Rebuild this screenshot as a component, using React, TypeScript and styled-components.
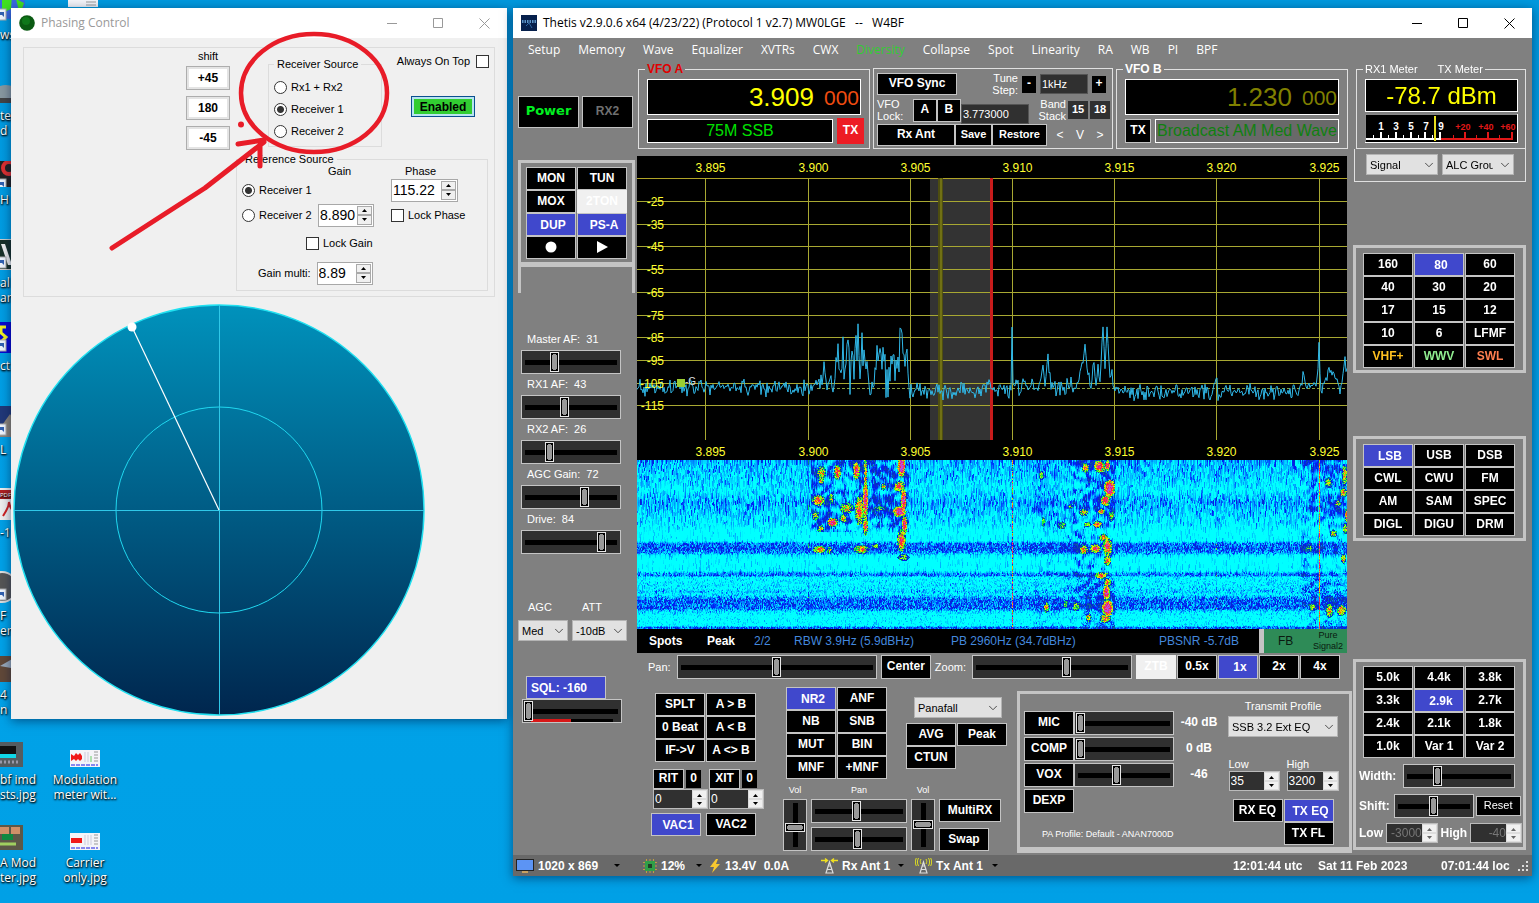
import React, { useEffect, useRef } from "react";
import styled, { createGlobalStyle, css } from "styled-components";
import { ChevronDown } from "lucide-react";

const UI = `"Liberation Sans", Arial, sans-serif`;
const SEGOE = `"Open Sans", "Noto Sans", sans-serif`;
const EDGE = "#c4c4c4";
const BLUE = "#4048cc";
const WELL = "#303030";

const Global = createGlobalStyle`
  * { box-sizing: border-box; }
  html, body { margin: 0; height: 100%; }
  body { font-family: ${UI}; font-size: 11px; line-height: 14px; overflow: hidden; background: #00a2e8; }
  button, input, select { font-family: inherit; margin: 0; padding: 0; border-radius: 0; }
  fieldset { margin: 0; min-width: 0; }
`;

/* ---------- desktop ---------- */

const Desktop = styled.div`
  position: relative;
  min-height: 100vh;
  overflow: hidden;
  background: linear-gradient(#0099de, #00a2e8 70%, #00a0e6);
`;

const Shortcut = styled.div<{ $x?: number; $y: number; $w?: number }>`
  position: absolute;
  left: ${(p) => p.$x ?? 0}px;
  top: ${(p) => p.$y}px;
  width: ${(p) => (p.$w ? `${p.$w}px` : "auto")};
  display: flex;
  flex-direction: column;
  align-items: ${(p) => (p.$w ? "center" : "flex-start")};
  gap: 5px;
  color: #fff;
  font: 12px/15px ${SEGOE};
  text-align: ${(p) => (p.$w ? "center" : "left")};
  white-space: pre;
  text-shadow: 1px 1px 2px #000, 0 1px 2px #000;
  svg { display: block; flex: none; }
`;

const WindowFrame = styled.section`
  position: absolute;
  top: 8px;
  box-shadow: 0 2px 10px rgba(0, 20, 60, 0.55);
`;

const TitleBar = styled.header<{ $dim?: boolean }>`
  display: flex;
  align-items: center;
  height: 30px;
  padding-left: 8px;
  gap: 6px;
  background: #fff;
  color: ${(p) => (p.$dim ? "#999" : "#000")};
  font: 12px/16px ${SEGOE};
  white-space: pre;
  h1 { font: inherit; margin: 0; flex: 1; }
`;

const CaptionButton = styled.button`
  width: 46px;
  height: 30px;
  border: 0;
  margin-right: -6px;
  background: none;
  color: inherit;
  display: grid;
  place-items: center;
  &:last-child { margin-right: 0; }
  path { fill: none; stroke: currentColor; }
`;

function Caption() {
  return (
    <>
      <CaptionButton aria-label="Minimize"><svg width="11" height="11"><path d="M0 5.500H10" /></svg></CaptionButton>
      <CaptionButton aria-label="Maximize"><svg width="11" height="11"><path d="M.5 .5H9.500V9.500H.5Z" /></svg></CaptionButton>
      <CaptionButton aria-label="Close"><svg width="11" height="11"><path d="M.5 .5L10.500 10.500M10.500 .5L.5 10.500" /></svg></CaptionButton>
    </>
  );
}

/* ---------- shared controls ---------- */

const Key = styled.button<{ $w?: number; $h?: number; $on?: boolean; $off?: boolean; $ink?: string; $size?: number; $plain?: boolean }>`
  width: ${(p) => p.$w ?? 50}px;
  height: ${(p) => p.$h ?? 23}px;
  flex: none;
  border: 1px solid ${EDGE};
  padding-bottom: 2px;
  background: #000;
  color: ${(p) => p.$ink ?? "#fff"};
  font-size: ${(p) => p.$size ?? 12}px;
  font-weight: ${(p) => (p.$plain ? "normal" : "bold")};
  line-height: 14px;
  white-space: nowrap;
  display: flex;
  align-items: center;
  justify-content: center;
  ${(p) => p.$on && css`background: ${BLUE}; padding: 0 0 0 4px;`}
  ${(p) => p.$off && css`background: #f0f0f0; border-color: #f0f0f0; color: #fff;`}
`;

const KeyGrid = styled.div<{ $cols: number }>`
  display: grid;
  grid-template-columns: repeat(${(p) => p.$cols}, 50px);
  grid-auto-rows: 23px;
  column-gap: 1px;
  flex: none;
`;

const Row = styled.div<{ $gap?: number; $align?: string }>`
  display: flex;
  gap: ${(p) => p.$gap ?? 0}px;
  align-items: ${(p) => p.$align ?? "center"};
`;

const thumb = css`
  -webkit-appearance: none;
  border: 1px solid #e8e8e8;
  border-radius: 0;
`;

const Range = styled.input.attrs({ type: "range", min: 0, max: 100 })<{ $w?: number; $meter?: boolean }>`
  -webkit-appearance: none;
  appearance: none;
  display: block;
  ${(p) => (p.$w ? `width: ${p.$w}px; flex: none;` : "flex: 1; width: 0; min-width: 0;")}
  height: 24px;
  border: 1px solid ${EDGE};
  background: ${(p) =>
      p.$meter ? "linear-gradient(#d81818, #d81818) 8px 100% / 40px 3px no-repeat, linear-gradient(#000, #000) 8px 100% / 82px 3px no-repeat, " : ""}
    linear-gradient(#000, #000) center / calc(100% - 6px) 5px no-repeat ${WELL};
  &::-webkit-slider-thumb {
    ${thumb}
    width: 9px;
    height: 20px;
    background: linear-gradient(#999, #999) center / 5px 14px no-repeat, linear-gradient(#999, #999) center / 3px 16px no-repeat #000;
  }
`;

const Fader = styled.input.attrs({ type: "range", min: 0, max: 100 })`
  -webkit-appearance: none;
  appearance: none;
  writing-mode: vertical-lr;
  direction: rtl;
  width: 24px;
  height: 52px;
  border: 1px solid ${EDGE};
  background: linear-gradient(#000, #000) center / 5px calc(100% - 6px) no-repeat ${WELL};
  &::-webkit-slider-thumb {
    ${thumb}
    width: 20px;
    height: 9px;
    background: linear-gradient(#999, #999) center / 14px 5px no-repeat, linear-gradient(#999, #999) center / 16px 3px no-repeat #000;
  }
`;

const SelectBox = styled.span<{ $w: number }>`
  position: relative;
  display: block;
  width: ${(p) => p.$w}px;
  height: 21px;
  flex: none;
  select {
    appearance: none;
    width: 100%;
    height: 100%;
    padding: 0 20px 0 3px;
    border: 1px solid #b4b4b4;
    background: #e1e1e1;
    color: #000;
    font-size: 11px;
  }
  svg { position: absolute; right: 2px; top: 4px; color: #444; pointer-events: none; }
`;

function Select({ w, value, label }: { w: number; value: string; label: string }) {
  return (
    <SelectBox $w={w}>
      <select aria-label={label}><option>{value}</option></select>
      <ChevronDown size={14} strokeWidth={1.6} />
    </SelectBox>
  );
}

const SpinBox = styled.span<{ $w: number; $light?: boolean; $dim?: boolean; $size?: number }>`
  display: flex;
  width: ${(p) => p.$w}px;
  height: ${(p) => (p.$light ? 23 : 20)}px;
  flex: none;
  border: 1px solid ${(p) => (p.$light ? "#a8a8a8" : "#bbb")};
  background: ${(p) => (p.$light ? "#fff" : WELL)};
  input {
    flex: 1;
    width: 0;
    min-width: 0;
    border: 0;
    padding-left: 1px;
    background: none;
    color: ${(p) => (p.$light ? "#000" : p.$dim ? "#777" : "#fff")};
    font-size: ${(p) => p.$size ?? 12}px;
    text-align: ${(p) => (p.$dim ? "right" : "left")};
  }
  span { display: grid; grid-template-rows: 1fr 1fr; width: 15px; background: #f0f0f0; ${(p) => p.$light && "margin: 1px;"} }
  button { border: 1px solid ${(p) => (p.$light ? "#aaa" : "#ddd")}; background: #f0f0f0; display: grid; place-items: center; }
`;

function Spin({ w, value, label, light, dim, size }: { w: number; value: string; label: string; light?: boolean; dim?: boolean; size?: number }) {
  const ink = dim ? "#666" : "#000";
  return (
    <SpinBox $w={w} $light={light} $dim={dim} $size={size}>
      <input type="text" aria-label={label} defaultValue={value} />
      <span>
        <button aria-label={`${label} up`}><svg width="7" height="4"><path d="M1 4L3.500 1L6 4Z" fill={ink} /></svg></button>
        <button aria-label={`${label} down`}><svg width="7" height="4"><path d="M1 0L3.500 3L6 0Z" fill={ink} /></svg></button>
      </span>
    </SpinBox>
  );
}

/* ---------- phasing window ---------- */

const PhasingFrame = styled(WindowFrame)`
  left: 11px;
  width: 496px;
  background: #f0f0f0;
  color: #000;
  padding-bottom: 3px;
`;

const PhasePanel = styled.div`
  margin: 9px 12px 7px;
  height: 250px;
  border: 1px solid #dcdcdc;
  padding-right: 6px;
  display: flex;
  flex-direction: column;
`;

const PhaseTop = styled.div`
  display: flex;
  height: 104px;
  padding-left: 162px;
`;

const ShiftColumn = styled.div`
  display: flex;
  flex-direction: column;
  align-items: center;
  width: 44px;
  padding-top: 1px;
  gap: 6px;
  span { margin-bottom: -3px; }
  button {
    width: 44px;
    height: 24px;
    border: 1px solid #adadad;
    box-shadow: inset 0 0 0 2px #e4e4e4;
    background: #fff;
    font-size: 12px;
    font-weight: bold;
  }
`;

const LightGroup = styled.fieldset<{ $w: number; $h: number }>`
  width: ${(p) => p.$w}px;
  height: ${(p) => p.$h}px;
  border: 1px solid #dcdcdc;
  padding: 0 0 0 5px;
  legend { padding: 0 3px; }
`;

const SourceGroup = styled(LightGroup)`
  margin: 9px 0 0 38px;
`;

const Choice = styled.label`
  display: flex;
  align-items: center;
  gap: 4px;
  white-space: nowrap;
  input { appearance: none; flex: none; width: 13px; height: 13px; border: 1px solid #333; background: #fff; }
  input[type="radio"] { border-radius: 50%; }
  input[type="radio"]:checked { background: radial-gradient(circle, #333 0 3px, #fff 4px); }
`;

const RadioStack = styled.div`
  display: flex;
  flex-direction: column;
  gap: 8px;
  padding-top: 9px;
`;

const TopRight = styled.div`
  margin-left: auto;
  margin-right: -6px;
  padding-top: 6px;
  display: flex;
  flex-direction: column;
  align-items: flex-end;
  gap: 28px;
  label { padding-right: 5px; gap: 6px; }
`;

const EnabledButton = styled.button`
  width: 64px;
  height: 21px;
  margin-right: 19px;
  border: 1px solid #0a5090;
  box-shadow: inset 0 0 0 2px #b8e4f0;
  background: #32cd32;
  font-size: 12px;
  font-weight: bold;
`;

const ReferenceGroup = styled(LightGroup)`
  margin-left: auto;
`;

const ReferenceGrid = styled.div`
  display: grid;
  grid-template-columns: 76px 73px 80px;
  grid-template-rows: 14px 24px 26px 30px 30px;
  align-items: center;
  margin-top: -2px;
`;

const Cell = styled.div<{ $col: string; $row: number; $indent?: number }>`
  grid-column: ${(p) => p.$col};
  grid-row: ${(p) => p.$row};
  display: flex;
  align-items: center;
  gap: 6px;
  padding-left: ${(p) => p.$indent ?? 0}px;
  white-space: nowrap;
`;

const Compass = styled.svg`
  display: block;
  width: 412px;
  height: 412px;
  margin-left: 2px;
`;

function Phasing() {
  return (
    <PhasingFrame aria-label="Phasing Control">
      <TitleBar $dim>
        <svg width="16" height="16"><circle cx="8" cy="8" r="7.8" fill="#0a5a12" /><circle cx="7" cy="6" r="4" fill="#128a20" opacity=".6" /></svg>
        <h1>Phasing Control</h1>
        <Caption />
      </TitleBar>
      <PhasePanel>
        <PhaseTop>
          <ShiftColumn>
            <span>shift</span>
            <button>+45</button>
            <button>180</button>
            <button>-45</button>
          </ShiftColumn>
          <SourceGroup $w={114} $h={90}>
            <legend>Receiver Source</legend>
            <RadioStack>
              <Choice><input type="radio" name="rx" />Rx1 + Rx2</Choice>
              <Choice><input type="radio" name="rx" defaultChecked />Receiver 1</Choice>
              <Choice><input type="radio" name="rx" />Receiver 2</Choice>
            </RadioStack>
          </SourceGroup>
          <TopRight>
            <Choice>Always On Top<input type="checkbox" /></Choice>
            <EnabledButton>Enabled</EnabledButton>
          </TopRight>
        </PhaseTop>
        <ReferenceGroup $w={252} $h={139}>
          <legend>Reference Source</legend>
          <ReferenceGrid>
            <Cell $col="2" $row={1} $indent={10}>Gain</Cell>
            <Cell $col="3" $row={1} $indent={14}>Phase</Cell>
            <Cell $col="1 / 3" $row={2}><Choice><input type="radio" name="ref" defaultChecked />Receiver 1</Choice></Cell>
            <Cell $col="3" $row={2}><Spin w={67} value="115.22" label="Phase" light size={14} /></Cell>
            <Cell $col="1" $row={3}><Choice><input type="radio" name="ref" />Receiver 2</Choice></Cell>
            <Cell $col="2" $row={3}><Spin w={56} value="8.890" label="Gain" light size={14} /></Cell>
            <Cell $col="3" $row={3}><Choice><input type="checkbox" />Lock Phase</Choice></Cell>
            <Cell $col="1 / 3" $row={4} $indent={64}><Choice><input type="checkbox" />Lock Gain</Choice></Cell>
            <Cell $col="1 / 3" $row={5} $indent={16}>Gain multi:<Spin w={56} value="8.89" label="Gain multi" light size={14} /></Cell>
          </ReferenceGrid>
        </ReferenceGroup>
      </PhasePanel>
      <Compass viewBox="0 0 412 412">
        <defs>
          <linearGradient id="sea" x1="0" y1="0" x2="0" y2="1"><stop offset="0" stopColor="#0092bc" /><stop offset="1" stopColor="#00264e" /></linearGradient>
        </defs>
        <circle cx="206" cy="206" r="205" fill="url(#sea)" stroke="#20e0f0" strokeWidth="1.4" />
        <circle cx="206" cy="206" r="103" fill="none" stroke="#20d8f0" />
        <path d="M206.5 1V411M1 206.5H411" stroke="#30c8e8" fill="none" />
        <path d="M206 206L119 23" stroke="#fff" strokeWidth="1.2" />
        <circle cx="119" cy="23" r="4.5" fill="#fff" />
      </Compass>
    </PhasingFrame>
  );
}

/* ---------- spectrum ---------- */

function seeded(seed: number) {
  let s = seed;
  return () => {
    s = (s * 1664525 + 1013904223) >>> 0;
    return s / 4294967296;
  };
}

const peaks: [number, number][] = [
  [0, 231], [180, 232], [184, 224], [185, 226], [187, 203], [189, 230], [193, 222], [196, 234], [199, 220], [201, 192], [203, 226],
  [206, 200], [208, 214], [211, 184], [213, 222], [216, 200], [217, 228], [219, 176], [220, 202], [221, 173], [223, 216], [225, 198], [227, 189], [229, 222],
  [231, 206], [233, 226], [237, 228], [239, 206], [241, 196], [244, 206], [247, 198], [250, 226], [254, 200], [257, 208],
  [259, 218], [262, 196], [263, 174], [265, 176], [267, 202], [269, 200], [272, 232], [275, 235], [345, 234], [347, 228], [374, 234], [375, 174],
  [376, 232], [402, 230], [406, 212], [408, 226], [411, 200], [414, 231], [440, 229], [445, 208], [448, 196], [450, 214], [454, 230],
  [457, 206], [459, 228], [461, 214], [463, 224], [466, 173], [468, 220], [470, 177], [473, 218], [474, 214], [477, 234], [479, 236],
  [577, 235], [579, 222], [581, 236], [662, 236], [666, 223], [670, 232], [680, 226], [682, 192], [684, 236], [692, 211], [697, 217], [704, 234], [708, 208], [710, 206],
];

function tracePath() {
  const rnd = seeded(41);
  let d = "";
  let k = 0;
  for (let x = 0; x <= 710; x += 1) {
    while (k < peaks.length - 2 && peaks[k + 1][0] <= x) k += 1;
    const [x0, y0] = peaks[k];
    const [x1, y1] = peaks[k + 1];
    const y = y0 + ((y1 - y0) * (x - x0)) / (x1 - x0);
    const spread = y > 228 ? 10 : x > 196 && x < 272 && y > 182 ? 26 : 9;
    const n = (rnd() + rnd() - 1) * spread;
    d += `${x ? "L" : "M"}${x} ${(y + n).toFixed(1)}`;
  }
  return d;
}

const trace = tracePath();
const freqs = ["3.895", "3.900", "3.905", "3.910", "3.915", "3.920", "3.925"];
const freqX = [68.5, 171.5, 273.5, 375.5, 477.5, 579.5, 682.5];
const levelY = [45.5, 68.5, 90.5, 113.5, 136.5, 159.5, 181.5, 204.5, 227.5, 249.5];
const levels = ["-25", "-35", "-45", "-55", "-65", "-75", "-85", "-95", "-105", "-115"];

const SpectrumSvg = styled.svg`
  display: block;
  width: 100%;
  background: #000;
  font-family: ${UI};
`;

function Spectrum() {
  return (
    <SpectrumSvg viewBox="0 0 710 304" role="img" aria-label="Spectrum">
      <rect x="293" y="22" width="62" height="262" fill="#333" />
      <g stroke="#a8a832" fill="none">
        <path d="M0 22.5H710" stroke="#b0a428" />
        {levelY.map((y) => <path key={y} d={`M0 ${y}H710`} />)}
        {freqX.map((x) => <path key={x} d={`M${x} 22V284`} />)}
      </g>
      <rect x="301" y="22" width="5" height="262" fill="#50500c" opacity=".9" />
      <rect x="303" y="22" width="2" height="262" fill="#707014" />
      <rect x="353" y="22" width="3" height="262" fill="#c81c1c" />
      <path d="M180 232.5H710" stroke="#a8c850" strokeDasharray="3 2" opacity=".8" />
      <path d={trace} fill="none" stroke="#30b8e8" />
      <g fill="#ffff30" fontSize="12" textAnchor="middle">
        {freqs.map((f, i) => <text key={f} x={freqX[i] + 5} y="16">{f}</text>)}
        {freqs.map((f, i) => <text key={f} x={freqX[i] + 5} y="300">{f}</text>)}
      </g>
      <g fill="#ffff30" fontSize="12" textAnchor="end">
        {levels.map((l, i) => <text key={l} x="27" y={levelY[i] + 4}>{l}</text>)}
      </g>
      <rect x="40" y="223" width="8" height="8" fill="#9acd32" />
      <text x="48" y="229" fontSize="10" fill="#ddd">-G</text>
    </SpectrumSvg>
  );
}

/* ---------- waterfall ---------- */

const WaterfallCanvas = styled.canvas`
  display: block;
  width: 100%;
`;

const blobs: [number, number, number, number, number][] = [
  [184, 12, 5, 7, 0.7], [184, 20, 3, 5, 0.7], [200, 12, 4, 8, 0.9], [219, 10, 4, 10, 1], [228, 12, 2, 30, 0.7], [222, 50, 5, 16, 0.9], [228, 40, 3, 22, 1.1],
  [181, 40, 7, 6, 0.9], [194, 38, 3, 6, 0.6], [209, 48, 7, 6, 0.7], [178, 55, 4, 5, 0.6], [195, 62, 6, 5, 1.1], [183, 68, 4, 4, 0.6], [206, 58, 4, 5, 0.7],
  [228, 66, 3, 10, 0.9], [246, 26, 3, 4, 0.7], [242, 48, 6, 3, 0.5], [264, 6, 4, 12, 1.3], [262, 26, 6, 6, 0.9], [266, 40, 3, 14, 1.2], [262, 51, 7, 6, 1.2],
  [267, 64, 3, 10, 1], [264, 80, 5, 12, 0.9], [266, 97, 6, 4, 0.5], [182, 89, 7, 4, 0.9], [192, 90, 3, 4, 0.6], [224, 89, 8, 5, 0.8], [238, 86, 4, 3, 0.6],
  [448, 7, 4, 5, 0.8], [462, 6, 6, 7, 1], [470, 5, 3, 6, 1], [472, 28, 6, 10, 1.2], [468, 40, 5, 6, 1], [433, 46, 3, 3, 0.5], [446, 52, 5, 4, 0.7], [464, 51, 4, 3, 0.8],
  [474, 56, 3, 6, 0.6], [424, 65, 5, 4, 0.5], [450, 64, 4, 3, 0.6], [460, 64, 5, 4, 0.9], [466, 77, 5, 4, 0.8], [470, 86, 5, 10, 1], [446, 89, 5, 5, 0.8],
  [458, 88, 6, 5, 0.9], [470, 100, 4, 6, 0.8], [464, 115, 7, 4, 0.8], [470, 122, 4, 5, 0.8], [469, 132, 4, 8, 1.2], [470, 148, 6, 9, 1.3], [468, 158, 6, 5, 0.8],
  [409, 147, 3, 6, 0.8], [439, 146, 4, 5, 0.6], [428, 144, 3, 4, 0.5], [451, 157, 3, 5, 0.6], [404, 15, 3, 5, 0.6], [406, 61, 2, 5, 0.6],
  [691, 22, 4, 6, 0.6], [707, 15, 3, 12, 0.7], [706, 32, 4, 5, 0.8], [700, 43, 4, 4, 0.5], [696, 73, 4, 4, 0.6], [708, 68, 3, 6, 0.7],
  [672, 88, 4, 4, 0.5], [706, 98, 3, 5, 0.8], [675, 147, 4, 4, 0.6], [692, 150, 4, 8, 0.7], [704, 150, 5, 6, 0.8], [709, 55, 2, 7, 0.9],
];

const palette: [number, number, number, number][] = [
  [0, 0, 255, 255], [0.3, 0, 150, 255], [0.5, 0, 30, 250], [0.64, 10, 40, 200], [0.74, 0, 240, 60], [0.9, 240, 240, 0], [1.05, 250, 50, 20], [1.2, 230, 30, 160], [1.4, 180, 90, 220],
];

function colourOf(v: number): [number, number, number] {
  for (let i = 1; i < palette.length; i += 1) {
    if (v <= palette[i][0]) {
      const a = palette[i - 1];
      const b = palette[i];
      const t = Math.max(0, (v - a[0]) / (b[0] - a[0]));
      return [a[1] + (b[1] - a[1]) * t, a[2] + (b[2] - a[2]) * t, a[3] + (b[3] - a[3]) * t];
    }
  }
  return [180, 90, 220];
}

/* Vertical profile of the noise floor, as points of (row, level). */
const profile: [number, number][] = [
  [0, 0.24], [8, 0.16], [18, 0.12], [28, 0.0], [34, 0.08], [42, 0.24], [48, 0.18], [56, 0.08], [64, 0.02], [70, -0.12], [80, -0.12],
  [83, 0.34], [88, 0.44], [92, 0.3], [95, -0.02], [99, -0.16], [110, -0.08], [113, 0.3], [115, 0.34], [117, -0.04], [122, 0.0], [128, 0.02], [131, 0.14],
  [134, 0.0], [137, 0.26], [140, 0.38], [148, 0.4], [151, 0.06], [156, -0.12], [165, -0.08], [167, 0.4], [169, 0.4],
];

function floorLevel(y: number) {
  for (let i = 1; i < profile.length; i += 1) {
    if (y <= profile[i][0]) {
      const [y0, v0] = profile[i - 1];
      const [y1, v1] = profile[i];
      return v0 + ((v1 - v0) * (y - y0)) / (y1 - y0);
    }
  }
  return 0.4;
}

function Waterfall() {
  const ref = useRef<HTMLCanvasElement>(null);
  useEffect(() => {
    const ctx = ref.current?.getContext("2d");
    if (!ctx) return;
    const W = 710;
    const H = 169;
    const img = ctx.createImageData(W, H);
    const rnd = seeded(7);
    for (let x = 0; x < W; x += 1) {
      let n = 0;
      let run = 0;
      const busy = (x > 173 && x < 272) || (x > 395 && x < 478) || x > 663;
      for (let y = 0; y < H; y += 1) {
        if (run <= 0) {
          n = (rnd() + rnd() - 1) * 0.42;
          run = (y > 80 && y < 94) || y > 110 ? 1 + Math.floor(rnd() * 2) : 2 + Math.floor(rnd() * 5);
        }
        run -= 1;
        let v = Math.min(floorLevel(y) + n, 0.62);
        if (busy) {
          const patch = Math.sin(x / 4 + Math.sin(y / 5) * 2) * Math.sin(y / 4 + Math.sin(x / 6) * 2);
          const reach = x < 300 ? (y < 72 ? 0.34 : 0) : x < 480 ? (x > 435 ? 0.3 : 0.12) : 0.24;
          v += reach * (0.55 + patch * 1.1);
          v = Math.min(v, 0.62 + (x < 300 || x > 435 ? rnd() * 0.06 : 0));
        }
        if (x === 375) v = 0.5 + rnd() * 0.9;
        if (x === 682) v = 0.75 + rnd() * 0.5;
        if (x === 579 || x === 171) v += 0.2;
        for (const [bx, by, rx, ry, s] of blobs) {
          const dx = (x - bx) / rx;
          const dy = (y - by) / ry;
          const r = dx * dx + dy * dy + (rnd() - 0.5) * 0.3;
          if (r < 0.9) v = Math.max(v, 0.42 + s * 0.78 * Math.exp(-Math.max(r, 0) * 1.3) + (rnd() - 0.5) * 0.34);
        }
        const [r, g, b] = colourOf(v);
        const o = (y * W + x) * 4;
        img.data[o] = r;
        img.data[o + 1] = g;
        img.data[o + 2] = b;
        img.data[o + 3] = 255;
      }
    }
    ctx.putImageData(img, 0, 0);
  }, []);
  return <WaterfallCanvas ref={ref} width={710} height={169} aria-label="Waterfall" />;
}

/* ---------- radio window ---------- */

const RadioFrame = styled(WindowFrame)`
  left: 513px;
  right: 7px;
  min-width: 1019px;
  background: #808080;
  color: #fff;
`;

const MenuBar = styled.nav`
  display: flex;
  gap: 18px;
  height: 24px;
  padding-left: 15px;
  font: 12px/24px ${SEGOE};
  a { color: #fff; text-decoration: none; }
  a[data-active] { color: #32cd32; }
`;

const Body = styled.main`
  display: grid;
  grid-template-columns: 124px 1fr 180px;
  padding-bottom: 2px;
`;

const LeftColumn = styled.div`
  display: flex;
  flex-direction: column;
  padding: 34px 0 0 5px;
`;

const PowerKey = styled(Key)`
  font-family: "DejaVu Sans", sans-serif;
  font-size: 13px;
`;

const SideFrame = styled.div`
  margin-top: 32px;
  width: 117px;
  border: 3px solid ${EDGE};
  border-bottom-width: 5px;
  padding: 4px 5px 3px;
`;

const SideWalls = styled.div`
  width: 117px;
  height: 26px;
  border: solid ${EDGE};
  border-width: 0 3px;
  margin-bottom: 37px;
`;

const Level = styled.div`
  height: 45px;
  padding-left: 3px;
  label { display: block; padding-left: 6px; line-height: 18px; margin-bottom: 2px; white-space: pre; }
`;

const AgcRow = styled.div`
  display: flex;
  gap: 4px;
  margin-top: 45px;
  label { display: flex; flex-direction: column; gap: 6px; }
  label > span:first-child { padding-left: 10px; }
`;

const Squelch = styled.div`
  margin-top: 35px;
  padding-left: 4px;
  button { margin-left: 4px; justify-content: flex-start; }
`;

const CenterColumn = styled.div`
  min-width: 0;
`;

const VfoRow = styled.div`
  display: grid;
  grid-template-columns: 1fr 240px 1fr;
  gap: 3px;
  padding: 0 4px 0 1px;
`;

const VfoGroup = styled.fieldset<{ $ink: string }>`
  height: 87px;
  border: 1px solid #e0e0e0;
  padding: 3px 8px 5px;
  legend { font-size: 12px; font-weight: bold; line-height: 14px; padding: 0 2px; margin-left: -2px; color: ${(p) => p.$ink}; }
`;

const Readout = styled.div<{ $h: number }>`
  display: flex;
  align-items: center;
  justify-content: flex-end;
  height: ${(p) => p.$h}px;
  padding-right: 1px;
  border: 1px solid #fff;
  background: #000;
`;

const FreqMain = styled.span<{ $dim?: boolean }>`
  font-size: 26px;
  line-height: 32px;
  color: ${(p) => (p.$dim ? "#808000" : "#ffff00")};
  margin-right: 10px;
`;

const FreqTail = styled.span<{ $dim?: boolean }>`
  font-size: 21px;
  line-height: 32px;
  padding-top: 1px;
  color: ${(p) => (p.$dim ? "#808000" : "#f04c10")};
`;

const BandName = styled.div<{ $dim?: boolean }>`
  flex: 1;
  height: 24px;
  border: 1px solid #fff;
  background: ${(p) => (p.$dim ? "#696969" : "#000")};
  color: ${(p) => (p.$dim ? "#108010" : "#00e000")};
  font-size: 16px;
  line-height: 22px;
  text-align: center;
  white-space: nowrap;
`;

const TxKey = styled(Key)<{ $hot?: boolean }>`
  ${(p) => p.$hot && css`background: #ed1c24; border-color: #ed1c24; margin-right: -3px;`}
`;

const VfoLine = styled(Row)`
  margin-top: 4px;
  height: 24px;
`;

const SyncPanel = styled.div`
  margin-top: 6px;
  height: 81px;
  border: 1px solid #e0e0e0;
  padding: 3px 2px 0 3px;
  display: grid;
  grid-template-rows: 24px 28px 22px;
`;

const Stacked = styled.span<{ $end?: boolean }>`
  font-size: 11px;
  line-height: 12px;
  white-space: pre;
  text-align: ${(p) => (p.$end ? "right" : "left")};
`;

const DarkField = styled.input.attrs({ type: "text" })<{ $w: number }>`
  width: ${(p) => p.$w}px;
  height: 20px;
  flex: none;
  border: 1px solid #555;
  padding-left: 1px;
  background: ${WELL};
  color: #fff;
  font-size: 11px;
`;

const StoredField = styled(DarkField)`
  align-self: flex-end;
`;

const FlatKey = styled(Key)<{ $fill?: string }>`
  border-color: ${(p) => p.$fill ?? "#000"};
  background: ${(p) => p.$fill ?? "#000"};
`;

const ArrowKey = styled.button`
  width: 20px;
  border: 0;
  background: none;
  color: #fff;
  font-size: 12px;
`;

const Push = styled.span`
  margin-left: auto;
`;

const Panadapter = styled.div`
  margin: 7px 5px 0 0;
`;

const InfoBar = styled.div`
  display: flex;
  height: 24px;
  background: #000;
  font-size: 12px;
  line-height: 24px;
  color: #4488dd;
  padding-left: 12px;
  white-space: nowrap;
  b { color: #fff; }
`;

const InfoCell = styled.span<{ $w?: number }>`
  ${(p) => (p.$w ? `width: ${p.$w}px;` : "flex: 1;")}
`;

const PureSignal = styled.div`
  display: flex;
  align-items: center;
  justify-content: space-between;
  width: 88px;
  padding: 0 4px 0 14px;
  border-left: 5px solid ${EDGE};
  background: #2e8b57;
  color: #0a1a10;
  small { font-size: 9px; line-height: 11px; text-align: center; white-space: pre; }
`;

const PanRow = styled.div`
  display: flex;
  align-items: center;
  gap: 4px;
  height: 24px;
  margin-top: 2px;
  padding: 0 12px 0 11px;
  label { margin-right: 2px; }
`;

const Lower = styled.div`
  display: flex;
  padding-left: 14px;
`;

const SplitColumn = styled.div`
  padding-top: 14px;
  width: 113px;
  flex: none;
`;

const SplitKeys = styled.div`
  padding-left: 4px;
  margin-bottom: 7px;
`;

const RitGrid = styled.div`
  display: grid;
  grid-template-columns: 55px 55px;
  column-gap: 1px;
  padding-left: 2px;
  margin-bottom: 4px;
`;

const DspColumn = styled.div`
  margin-left: 19px;
  width: 224px;
  padding-top: 8px;
  flex: none;
`;

const DspTop = styled.div`
  display: flex;
  gap: 19px;
  padding-left: 3px;
`;

const DisplayModes = styled.div`
  padding-top: 10px;
  span + div { margin-top: 5px; }
  > span { margin-left: 8px; }
`;

const Mixer = styled.div`
  display: grid;
  grid-template-columns: 24px 96px 24px 62px;
  grid-template-rows: 12px 52px;
  gap: 3px 4px;
  margin-top: 5px;
  > label { font-size: 9px; line-height: 12px; text-align: center; }
`;

const MixStack = styled.div`
  display: flex;
  flex-direction: column;
  justify-content: space-between;
  input { flex: none; }
`;

const TransmitPanel = styled.div`
  flex: 1;
  min-width: 0;
  height: 162px;
  margin: 12px 0 0 10px;
  border: 3px solid ${EDGE};
  border-bottom-width: 6px;
  display: flex;
  justify-content: space-between;
  padding: 5px 11px 0 4px;
`;

const TxRows = styled.div`
  padding-top: 12px;
  display: grid;
  grid-template-columns: 50px 100px 50px;
  grid-auto-rows: 24px;
  row-gap: 2px;
  align-content: start;
  align-items: center;
  b { font-size: 12px; text-align: center; white-space: nowrap; padding-bottom: 2px; }
  small { grid-column: 1 / 4; font-size: 9px; padding: 14px 0 0 18px; white-space: nowrap; }
`;

const TxProfile = styled.div`
  width: 110px;
  display: flex;
  flex-direction: column;
  align-items: center;
  gap: 3px;
`;

const CutoffRow = styled.div`
  display: flex;
  gap: 6px;
  margin-top: 18px;
  label { display: block; line-height: 13px; padding-left: 1px; }
`;

const EqGrid = styled.div`
  margin-top: 5px;
  display: grid;
  grid-template-columns: 50px 50px;
  column-gap: 1px;
  button:last-child { grid-column: 2; }
`;

const RightColumn = styled.div`
  padding: 0 6px 0 1px;
`;

const MeterGroup = styled.fieldset`
  margin-left: 3px;
  height: 87px;
  border: 1px solid #e0e0e0;
  padding: 3px 7px 5px 8px;
  legend { padding: 0 2px; margin-left: -2px; line-height: 14px; white-space: pre; display: flex; gap: 20px; }
`;

const MeterValue = styled.div`
  height: 33px;
  border: 1px solid #fff;
  background: #000;
  color: #ffff00;
  font-size: 24px;
  line-height: 31px;
  text-align: center;
  margin-bottom: 2px;
`;

const MeterSelects = styled.div`
  display: flex;
  gap: 4px;
  height: 33px;
  margin-left: 1px;
  padding: 5px 0 0 11px;
  border: 1px solid #e0e0e0;
  border-top: 0;
`;

const KeyFrame = styled.div`
  margin-top: 63px;
  border: 3px solid ${EDGE};
  padding: 5px 0 2px 7px;
`;

const FilterFrame = styled(KeyFrame)`
  margin-top: 118px;
  padding: 4px 0 4px 7px;
`;

const FilterLine = styled.div<{ $gap: number; $end?: number }>`
  display: flex;
  align-items: center;
  justify-content: space-between;
  gap: 2px;
  margin: ${(p) => p.$gap}px ${(p) => p.$end ?? 3}px 0 -4px;
  font-size: 12px;
  font-weight: bold;
  white-space: nowrap;
`;

const StatusBar = styled.footer`
  display: flex;
  align-items: center;
  height: 21px;
  padding: 0 3px;
  background: #696969;
  font-size: 12px;
  font-weight: bold;
  line-height: 20px;
  white-space: pre;
`;

const StatusItem = styled.span<{ $w: number; $pad?: number }>`
  display: flex;
  align-items: center;
  gap: 4px;
  width: ${(p) => p.$w}px;
  padding-right: ${(p) => p.$pad ?? 0}px;
  flex: none;
`;

const CaretSvg = styled.svg`
  margin-left: auto;
`;

function Caret() {
  return <CaretSvg width="6" height="3"><path d="M0 0H6L3 3Z" fill="#000" /></CaretSvg>;
}

function MeterScale() {
  const white: [number, string][] = [[16, "1"], [31, "3"], [46, "5"], [61, "7"], [76, "9"]];
  const red: [number, string][] = [[98, "+20"], [121, "+40"], [143, "+60"]];
  return (
    <svg width="100%" height="29" viewBox="0 0 153 29" role="img" aria-label="S meter" fontFamily="Liberation Sans" fontWeight="bold">
      <rect width="153" height="29" fill="#fff" />
      <rect x="0" y="0" width="152" height="28" fill="#888" />
      <rect x="1" y="1" width="151" height="27" fill="#000" />
      <g fill="#fff" fontSize="10" textAnchor="middle">{white.map(([x, t]) => <text key={t} x={x} y="16">{t}</text>)}</g>
      <g fill="#e01818" fontSize="9" textAnchor="middle">{red.map(([x, t]) => <text key={t} x={x} y="16">{t}</text>)}</g>
      <path d="M1 25H76M16 24V18M31 24V18M46 24V18M60 24V18M75 24V18" stroke="#fff" strokeWidth="2" />
      <path d="M8.500 24V21M23.500 24V21M38.500 24V21M53.500 24V21M67.500 24V21" stroke="#fff" />
      <path d="M76 25H148M100 24V18M123 24V18M147 24V18" stroke="#e01818" strokeWidth="2" />
      <path d="M88.500 24V21M111.500 24V21M134.500 24V21" stroke="#e01818" />
      <path d="M70 2V27" stroke="#e8e020" strokeWidth="2" />
    </svg>
  );
}

function Antenna({ tx }: { tx?: boolean }) {
  return (
    <svg width="17" height="17" viewBox="0 0 17 17" fill="none">
      <path d="M8.500 5L5 16H12ZM7.500 9H9.500M6 12.500H11" stroke="#ddd" strokeWidth="1.2" />
      {tx ? (
        <path d="M6 2C5 4 5 5 6 7M11 2C12 4 12 5 11 7M3.500 1C2 4 2 6 3.500 9M13.500 1C15 4 15 6 13.500 9M1.300 1C0 4 0 6 1.300 9M15.700 1C17 4 17 6 15.700 9" stroke="#e0e020" />
      ) : (
        <path d="M0 3.500H6M4 1.500L6.500 3.500L4 5.500M17 3.500H11M13 1.500L10.500 3.500L13 5.500" stroke="#f0e020" strokeWidth="1.4" />
      )}
    </svg>
  );
}

const levelsAf: [string, string, number][] = [
  ["Master AF", "31", 31], ["RX1 AF", "43", 43], ["RX2 AF", "26", 26], ["AGC Gain", "72", 65], ["Drive", "84", 84],
];
const menu = ["Setup", "Memory", "Wave", "Equalizer", "XVTRs", "CWX", "Diversity", "Collapse", "Spot", "Linearity", "RA", "WB", "PI", "BPF"];
const bands = ["160", "80", "60", "40", "30", "20", "17", "15", "12", "10", "6", "LFMF", "VHF+", "WWV", "SWL"];
const bandInk: Record<string, string> = { "VHF+": "#ffc020", WWV: "#90ee90", SWL: "#ff7f50" };
const modes = ["LSB", "USB", "DSB", "CWL", "CWU", "FM", "AM", "SAM", "SPEC", "DIGL", "DIGU", "DRM"];
const filters = ["5.0k", "4.4k", "3.8k", "3.3k", "2.9k", "2.7k", "2.4k", "2.1k", "1.8k", "1.0k", "Var 1", "Var 2"];

function Keys({ cols, items, on = [], ink = {} }: { cols: number; items: string[]; on?: string[]; ink?: Record<string, string> }) {
  return (
    <KeyGrid $cols={cols}>
      {items.map((t) => <Key key={t} $on={on.includes(t)} $ink={ink[t]}>{t}</Key>)}
    </KeyGrid>
  );
}

function LeftControls() {
  return (
    <LeftColumn>
      <Row $gap={3}>
        <PowerKey $w={61} $h={32} $ink="#00f020">Power</PowerKey>
        <Key $w={51} $h={32} $ink="#707070">RX2</Key>
      </Row>
      <SideFrame>
        <KeyGrid $cols={2}>
          <Key>MON</Key><Key>TUN</Key>
          <Key>MOX</Key><Key $off>2TON</Key>
          <Key $on>DUP</Key><Key $on>PS-A</Key>
          <Key aria-label="Record"><svg width="12" height="12"><circle cx="6" cy="6" r="5.5" fill="#fff" /></svg></Key>
          <Key aria-label="Play"><svg width="12" height="12"><path d="M1 0L12 6L1 12Z" fill="#fff" /></svg></Key>
        </KeyGrid>
      </SideFrame>
      <SideWalls />
      {levelsAf.map(([name, shown, v]) => (
        <Level key={name}>
          <label htmlFor={name}>{`${name}:  ${shown}`}</label>
          <Range id={name} $w={100} defaultValue={v} />
        </Level>
      ))}
      <AgcRow>
        <label><span>AGC</span><Select w={50} value="Med" label="AGC" /></label>
        <label><span>ATT</span><Select w={55} value="-10dB" label="ATT" /></label>
      </AgcRow>
      <Squelch>
        <Key $w={80} $on>SQL: -160</Key>
        <Range $w={100} $meter defaultValue={1} aria-label="Squelch" />
      </Squelch>
    </LeftColumn>
  );
}

function VfoSection() {
  return (
    <VfoRow>
      <VfoGroup $ink="#e00000">
        <legend>VFO A</legend>
        <Readout $h={36}><FreqMain>3.909</FreqMain><FreqTail>000</FreqTail></Readout>
        <VfoLine $gap={4}><BandName>75M SSB</BandName><TxKey $w={27} $h={26} $hot>TX</TxKey></VfoLine>
      </VfoGroup>
      <SyncPanel>
        <Row>
          <Key $w={80} $h={22}>VFO Sync</Key>
          <Push /><Stacked $end>{"Tune\nStep:"}</Stacked>
          <Row $gap={4}>
            <span />
            <FlatKey $w={14} $h={17}>-</FlatKey>
            <DarkField $w={48} defaultValue="1kHz" aria-label="Tune step" />
            <FlatKey $w={14} $h={17}>+</FlatKey>
            <span />
          </Row>
        </Row>
        <Row>
          <Stacked>{"VFO\nLock:"}</Stacked>
          <Push />
          <Key $w={24}>A</Key><Key $w={24}>B</Key>
          <StoredField $w={68} defaultValue="3.773000" aria-label="Stored frequency" />
          <Push /><Stacked $end>{"Band\nStack"}</Stacked>
          <Row $gap={2}>
            <span />
            <FlatKey $w={20} $h={18} $size={11} $fill={WELL}>15</FlatKey>
            <FlatKey $w={20} $h={18} $size={11} $fill={WELL}>18</FlatKey>
          </Row>
        </Row>
        <Row>
          <Key $w={78} $h={22}>Rx Ant</Key><Key $w={37} $h={22} $size={11}>Save</Key><Key $w={55} $h={22} $size={11}>Restore</Key>
          <Push />
          <ArrowKey>&lt;</ArrowKey><ArrowKey>V</ArrowKey><ArrowKey>&gt;</ArrowKey>
        </Row>
      </SyncPanel>
      <VfoGroup $ink="#fff">
        <legend>VFO B</legend>
        <Readout $h={36}><FreqMain $dim>1.230</FreqMain><FreqTail $dim>000</FreqTail></Readout>
        <VfoLine $gap={4}><TxKey $w={26} $h={24}>TX</TxKey><BandName $dim>Broadcast AM Med Wave</BandName></VfoLine>
      </VfoGroup>
    </VfoRow>
  );
}

function LowerControls() {
  return (
    <Lower>
      <SplitColumn>
        <SplitKeys><Keys cols={2} items={["SPLT", "A > B", "0 Beat", "A < B", "IF->V", "A <> B"]} /></SplitKeys>
        <RitGrid>
          <Row $gap={2}><Key $w={31} $h={20}>RIT</Key><FlatKey $w={15} $h={18}>0</FlatKey></Row>
          <Row $gap={2}><Key $w={31} $h={20}>XIT</Key><FlatKey $w={15} $h={18}>0</FlatKey></Row>
          <Spin w={55} value="0" label="RIT" />
          <Spin w={55} value="0" label="XIT" />
        </RitGrid>
        <Row $gap={5}><Key $on>VAC1</Key><Key>VAC2</Key></Row>
      </SplitColumn>
      <DspColumn>
        <DspTop>
          <Keys cols={2} items={["NR2", "ANF", "NB", "SNB", "MUT", "BIN", "MNF", "+MNF"]} on={["NR2"]} />
          <DisplayModes>
            <Select w={88} value="Panafall" label="Display mode" />
            <Keys cols={2} items={["AVG", "Peak", "CTUN"]} />
          </DisplayModes>
        </DspTop>
        <Mixer>
          <label htmlFor="vol1">Vol</label><label htmlFor="pan1">Pan</label><label htmlFor="vol2">Vol</label><span />
          <Fader id="vol1" defaultValue={44} />
          <MixStack>
            <Range id="pan1" $w={96} defaultValue={47} />
            <Range $w={96} defaultValue={48} aria-label="Sub pan" />
          </MixStack>
          <Fader id="vol2" defaultValue={51} />
          <MixStack><Key $w={62}>MultiRX</Key><Key>Swap</Key></MixStack>
        </Mixer>
      </DspColumn>
      <TransmitPanel>
        <TxRows>
          <Key $h={24}>MIC</Key><Range $w={100} defaultValue={1} aria-label="Mic gain" /><b>-40 dB</b>
          <Key $h={24}>COMP</Key><Range $w={100} defaultValue={1} aria-label="Compression" /><b>0 dB</b>
          <Key $h={24}>VOX</Key><Range $w={100} defaultValue={42} aria-label="Vox level" /><b>-46</b>
          <Key $h={24}>DEXP</Key><span /><span />
          <small>PA Profile: Default - ANAN7000D</small>
        </TxRows>
        <TxProfile>
          <span>Transmit Profile</span>
          <Select w={110} value="SSB 3.2 Ext EQ" label="Transmit Profile" />
          <CutoffRow>
            <label>Low<Spin w={51} value="35" label="Low" /></label>
            <label>High<Spin w={52} value="3200" label="High" /></label>
          </CutoffRow>
          <EqGrid><Key>RX EQ</Key><Key $on>TX EQ</Key><Key>TX FL</Key></EqGrid>
        </TxProfile>
      </TransmitPanel>
    </Lower>
  );
}

function RightControls() {
  return (
    <RightColumn>
      <MeterGroup>
        <legend><span>RX1 Meter</span><span>TX Meter</span></legend>
        <MeterValue>-78.7 dBm</MeterValue>
        <MeterScale />
      </MeterGroup>
      <MeterSelects>
        <Select w={72} value="Signal" label="RX meter" />
        <Select w={72} value="ALC Group" label="TX meter" />
      </MeterSelects>
      <KeyFrame><Keys cols={3} items={bands} on={["80"]} ink={bandInk} /></KeyFrame>
      <KeyFrame><Keys cols={3} items={modes} on={["LSB"]} /></KeyFrame>
      <FilterFrame>
        <Keys cols={3} items={filters} on={["2.9k"]} />
        <FilterLine $gap={6} $end={8}><label htmlFor="width">Width:</label><Range id="width" $w={112} defaultValue={29} /></FilterLine>
        <FilterLine $gap={6}>
          <label htmlFor="shift">Shift:</label><Push /><Range id="shift" $w={80} defaultValue={50} />
          <Key $w={45} $h={20} $size={11} $plain>Reset</Key>
        </FilterLine>
        <FilterLine $gap={5} $end={1}>
          <span>Low</span><Spin w={52} value="-3000" label="Filter low" dim /><span>High</span><Spin w={52} value="-40" label="Filter high" dim />
        </FilterLine>
      </FilterFrame>
    </RightColumn>
  );
}

function Radio() {
  return (
    <RadioFrame aria-label="Thetis">
      <TitleBar>
        <svg width="16" height="16"><rect width="16" height="16" fill="#06204c" /><path d="M1 6.500H15" stroke="#5c94c8" strokeWidth="3" strokeDasharray="1.500 1" fill="none" /><path d="M5 11L8 8L11 13" stroke="#2c64a0" fill="none" /></svg>
        <h1>{"Thetis v2.9.0.6 x64 (4/23/22) (Protocol 1 v2.7) MW0LGE   --   W4BF"}</h1>
        <Caption />
      </TitleBar>
      <MenuBar>
        {menu.map((m) => <a key={m} href={`#${m}`} data-active={m === "Diversity" ? "" : undefined}>{m}</a>)}
      </MenuBar>
      <Body>
        <LeftControls />
        <CenterColumn>
          <VfoSection />
          <Panadapter>
            <Spectrum />
            <Waterfall />
            <InfoBar>
              <InfoCell $w={58}><b>Spots</b></InfoCell>
              <InfoCell $w={47}><b>Peak</b></InfoCell>
              <InfoCell $w={40}>2/2</InfoCell>
              <InfoCell $w={157}>RBW 3.9Hz (5.9dBHz)</InfoCell>
              <InfoCell>PB 2960Hz (34.7dBHz)</InfoCell>
              <InfoCell $w={100}>PBSNR -5.7dB</InfoCell>
              <PureSignal>FB<small>{"Pure\nSignal2"}</small></PureSignal>
            </InfoBar>
          </Panadapter>
          <PanRow>
            <label htmlFor="pan">Pan:</label>
            <Range id="pan" defaultValue={50} />
            <Key $h={24}>Center</Key>
            <label htmlFor="zoom">Zoom:</label>
            <Range id="zoom" $w={160} defaultValue={60} />
            <Row $gap={1}>
              <Key $w={40} $h={24} $off>ZTB</Key>
              <Key $w={40} $h={24}>0.5x</Key>
              <Key $w={40} $h={24} $on>1x</Key>
              <Key $w={40} $h={24}>2x</Key>
              <Key $w={40} $h={24}>4x</Key>
            </Row>
          </PanRow>
          <LowerControls />
        </CenterColumn>
        <RightControls />
      </Body>
      <StatusBar>
        <StatusItem $w={127} $pad={23}>
          <svg width="18" height="14"><rect x=".5" y=".5" width="17" height="11" fill="#5c94f4" stroke="#222" /><rect x="6" y="12" width="6" height="2" fill="#c8a060" /></svg>
          <span>1020 x 869</span><Caret />
        </StatusItem>
        <StatusItem $w={66} $pad={7}>
          <svg width="14" height="14"><path d="M3.500 0V14M7 0V14M10.500 0V14M0 3.500H14M0 7H14M0 10.500H14" stroke="#c0a040" /><rect x="2" y="2" width="10" height="10" fill="#30a048" /><rect x="5" y="5" width="4" height="4" fill="#204028" /></svg>
          <span>12%</span><Caret />
        </StatusItem>
        <StatusItem $w={112}>
          <svg width="12" height="14"><path d="M7 0L1 8H5L3 14L11 5H7L9 0Z" fill="#f8c830" /></svg>
          <span>13.4V</span><span>{" 0.0A"}</span>
        </StatusItem>
        <StatusItem $w={94} $pad={11}><Antenna /><span>Rx Ant 1</span><Caret /></StatusItem>
        <StatusItem $w={88} $pad={5}><Antenna tx /><span>Tx Ant 1</span><Caret /></StatusItem>
        <Push />
        <StatusItem $w={85}>12:01:44 utc</StatusItem>
        <StatusItem $w={123}>Sat 11 Feb 2023</StatusItem>
        <StatusItem $w={76}>07:01:44 loc</StatusItem>
        <svg width="12" height="12" fill="#ddd"><path d="M9 1h2v2h-2zM9 5h2v2h-2zM9 9h2v2h-2zM5 5h2v2h-2zM5 9h2v2h-2zM1 9h2v2h-2z" /></svg>
      </StatusBar>
    </RadioFrame>
  );
}

/* ---------- desktop shortcuts and pen marks ---------- */

const PenMarks = styled.svg`
  position: absolute;
  left: 0;
  top: 0;
  pointer-events: none;
`;

function LinkArrow() {
  return (
    <g>
      <rect x="-1" y="18" width="7" height="11" fill="#eef4fc" stroke="#aaa" />
      <path d="M0 21H4V26L2 24H0Z" fill="#3060b0" />
    </g>
  );
}

function Shortcuts() {
  return (
    <>
      <Shortcut $y={-9}>
        <svg width="26" height="31"><circle cx="10" cy="13" r="15" fill="#3868e0" /><path d="M2 6L12 4L11 18L2 22ZM16 8L24 12L20 24Z" fill="#40e020" /><LinkArrow /></svg>
        ws
      </Shortcut>
      <Shortcut $y={78}>
        <svg width="22" height="25"><rect y="8" width="22" height="17" fill="#444" /><path d="M0 8Q12 4 22 16V20H0Z" fill="#8898a0" /></svg>
        {"te\nd"}
      </Shortcut>
      <Shortcut $y={161}>
        <svg width="22" height="26"><rect width="22" height="26" fill="#222" /><circle cx="9" cy="7" r="6" fill="none" stroke="#e03030" strokeWidth="4" /><LinkArrow /></svg>
        H
      </Shortcut>
      <Shortcut $y={239}>
        <svg width="22" height="31"><rect x="-1" y=".5" width="23" height="30" fill="#183028" stroke="#ccc" /><path d="M1 5L8 26H12L5 5Z" fill="#eee" /><LinkArrow /></svg>
        {"al\nar"}
      </Shortcut>
      <Shortcut $y={322}>
        <svg width="22" height="31"><rect width="22" height="31" fill="#0808d0" /><path d="M6 5H1V11L6 15L1 20" stroke="#f0f020" strokeWidth="3" fill="none" /><LinkArrow /></svg>
        ct
      </Shortcut>
      <Shortcut $y={406}>
        <svg width="22" height="31"><rect width="22" height="31" fill="#203878" /><path d="M0 22L10 8L22 26V31H0Z" fill="#8c8478" /><LinkArrow /></svg>
        L
      </Shortcut>
      <Shortcut $y={488}>
        <svg width="22" height="32"><rect width="22" height="32" fill="#eee" /><rect y="2" width="22" height="9" fill="#b02020" /><text x="0" y="9" fontSize="6" fill="#fff">PDF</text><path d="M3 28C7 22 9 18 9 14C10 20 13 24 17 25" stroke="#d02020" strokeWidth="2" fill="none" /></svg>
        -1
      </Shortcut>
      <Shortcut $y={571}>
        <svg width="22" height="32"><circle cx="2" cy="16" r="15" fill="#555" stroke="#ddd" strokeWidth="2" /><LinkArrow /></svg>
        {"F\ner"}
      </Shortcut>
      <Shortcut $y={656}>
        <svg width="22" height="26"><rect width="22" height="26" fill="#604838" /><path d="M0 10L14 2L22 14Z" fill="#98a8b8" /></svg>
        {"4\nn"}
      </Shortcut>
      <Shortcut $y={742}>
        <svg width="23" height="25"><rect width="23" height="25" fill="#555c60" /><rect y="4" width="16" height="8" fill="#111" /><rect y="12" width="16" height="4" fill="#10d8e8" /><path d="M0 20H20" stroke="#99a" strokeDasharray="2 2" strokeWidth="3" /></svg>
        {"bf imd\nsts.jpg"}
      </Shortcut>
      <Shortcut $y={825}>
        <svg width="23" height="25"><rect width="23" height="25" fill="#5c5848" /><rect y="2" width="9" height="7" fill="#d09068" /><rect x="11" y="2" width="9" height="7" fill="#d09068" /><rect x="2" y="9" width="11" height="6" fill="#108840" /><path d="M0 19H16" stroke="#a0d060" strokeWidth="3" /></svg>
        {"A Mod\nter.jpg"}
      </Shortcut>
      <Shortcut $x={40} $y={750} $w={90}>
        <svg width="30" height="17"><rect width="30" height="17" fill="#f4f4f8" /><path d="M1 4L4 6L6 3L8 5L10 3L12 6V9L10 11L8 9L6 11L4 9L1 11Z" fill="#f01818" /><path d="M15 2V12M18 2V12" stroke="#ccd" /><path d="M21 6V12" stroke="#6c6" /><path d="M24 2H28M24 5H28M24 8H28M24 11H28" stroke="#999" /><path d="M1 15H28" stroke="#88e" strokeDasharray="4 1" strokeWidth="2" /></svg>
        {"Modulation\nmeter wit..."}
      </Shortcut>
      <Shortcut $x={40} $y={833} $w={90}>
        <svg width="30" height="17"><rect width="30" height="17" fill="#f4f4f8" /><rect x="1" y="5" width="11" height="5" fill="#f01818" /><path d="M15 2V12M18 2V12M21 2V12" stroke="#ccd" /><path d="M24 2H28M24 5H28M24 8H28M24 11H28" stroke="#999" /><path d="M1 15H28" stroke="#88e" strokeDasharray="4 1" strokeWidth="2" /></svg>
        {"Carrier\nonly.jpg"}
      </Shortcut>
      <Shortcut $x={40} $y={-10} $w={86}>
        <svg width="30" height="17"><rect width="30" height="17" fill="#f4f4f8" /><path d="M18 12H28M18 15H28" stroke="#999" /></svg>
      </Shortcut>
    </>
  );
}

export default function App() {
  return (
    <Desktop>
      <Global />
      <Shortcuts />
      <Phasing />
      <Radio />
      <PenMarks width="420" height="280" fill="none" stroke="#e81c28" strokeWidth="5" strokeLinecap="round">
        <ellipse cx="314" cy="93" rx="73" ry="59" strokeWidth="4.5" />
        <path d="M112 248L160 217L205 188L264 142M238 144L264 140M260 145V166" strokeLinejoin="round" />
        <circle cx="241" cy="124.500" r="3" fill="#e81c28" stroke="none" />
      </PenMarks>
    </Desktop>
  );
}
